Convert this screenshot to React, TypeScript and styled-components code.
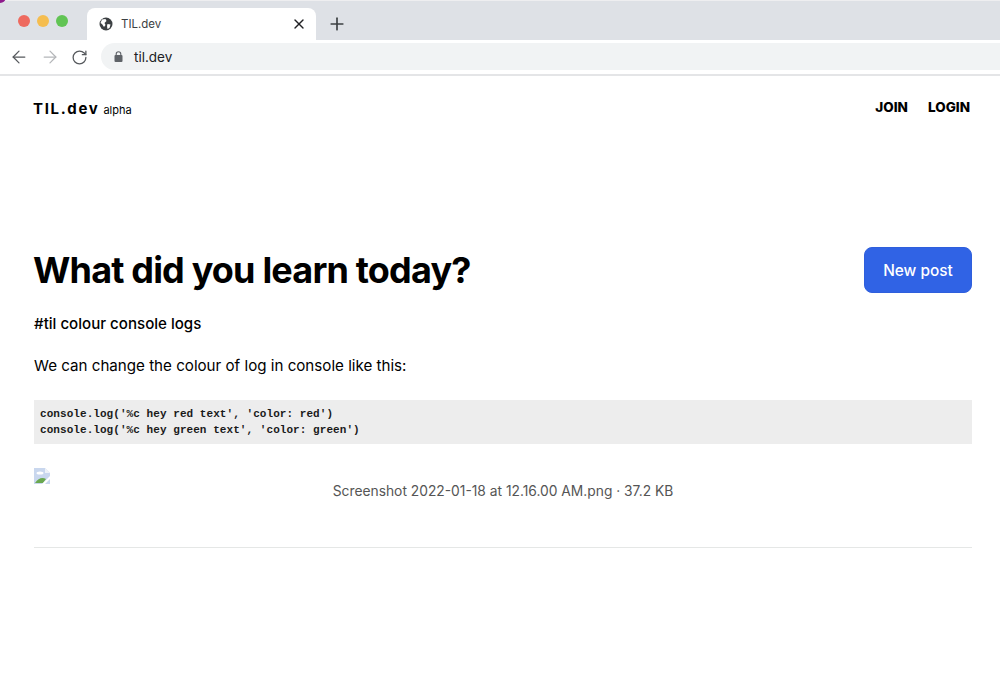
import React from 'react';
import styled, { createGlobalStyle } from 'styled-components';
import { ArrowLeft, ArrowRight, Plus, RotateCw, X } from 'lucide-react';

const GlobalStyle = createGlobalStyle`
  html, body {
    margin: 0;
    padding: 0;
    background: #fff;
    font-family: Inter, "Liberation Sans", sans-serif;
    color: #000;
  }
`;

const Window = styled.div`
  width: 1000px;
  height: 699px;
  overflow: hidden;
`;

const TabStrip = styled.div`
  position: relative;
  height: 40px;
  box-sizing: border-box;
  background: #dee1e6;
  border-top: 1px solid #eeeef0;
  display: flex;
  align-items: flex-end;
  padding-left: 87px;
`;

const CornerMark = styled.div`
  position: absolute;
  left: -6px;
  top: -10px;
  width: 12px;
  height: 12px;
  border-radius: 50%;
  background: #8e1a8c;
`;

const Lights = styled.div`
  position: absolute;
  left: 18px;
  top: 14px;
  display: flex;
  gap: 7px;
`;

const Light = styled.span<{ $color: string }>`
  width: 12px;
  height: 12px;
  border-radius: 50%;
  background: ${(p) => p.$color};
`;

const Tab = styled.div`
  width: 229px;
  height: 32px;
  box-sizing: border-box;
  background: #fff;
  border-radius: 8px 8px 0 0;
  display: flex;
  align-items: center;
  padding: 0 9px 0 12px;
  font-size: 11.5px;
  color: #3c4043;
`;

const TabTitle = styled.span`
  margin-left: 8px;
  flex: 1;
`;

const NewTab = styled.div`
  height: 32px;
  margin-left: 11px;
  display: flex;
  align-items: center;
  color: #3c4043;
`;

const Toolbar = styled.div`
  height: 36px;
  box-sizing: border-box;
  background: #fff;
  border-bottom: 2px solid #e4e5e7;
  display: flex;
  align-items: center;
  padding-left: 9px;
`;

const NavIcons = styled.div`
  display: flex;
  align-items: center;
  gap: 11px;
  color: #55585c;
`;

const Omnibox = styled.div`
  margin-left: 13px;
  flex: 1;
  height: 27px;
  margin-bottom: 1px;
  border-radius: 14px 0 0 14px;
  background: #f1f3f4;
  display: flex;
  align-items: center;
  padding-left: 13px;
  font-size: 13.5px;
  color: #202124;
  gap: 11px;
`;

const Page = styled.div`
  padding: 0 28px 0 34px;
`;

const Header = styled.header`
  height: 62px;
  display: flex;
  align-items: center;
  justify-content: space-between;
  margin-left: -1px;
  padding-right: 2px;
`;

const Brand = styled.div`
  display: flex;
  align-items: baseline;
  gap: 4px;
  padding-top: 2px;
`;

const Logo = styled.span`
  font-size: 15px;
  font-weight: 700;
  letter-spacing: 1.65px;
`;

const Stage = styled.span`
  font-size: 11px;
`;

const HeaderLinks = styled.nav`
  display: flex;
  gap: 20px;
  font-size: 13.5px;
  font-weight: 800;
`;

const TitleRow = styled.div`
  margin-top: 109px;
  display: flex;
  align-items: center;
  justify-content: space-between;
`;

const Title = styled.h1`
  margin: 0 0 0 -1px;
  font-size: 36px;
  line-height: 46px;
  font-weight: 700;
  letter-spacing: -0.82px;
`;

const NewPost = styled.button`
  width: 108px;
  height: 46px;
  border: 1px solid #2f5fdc;
  border-radius: 8px;
  background: #3063e5;
  color: #fff;
  font: 500 15.4px Inter, "Liberation Sans", sans-serif;
`;

const PostTitle = styled.p`
  margin: 21px 0 0;
  font-size: 15.1px;
  line-height: 20px;
  font-weight: 500;
`;

const PostBody = styled.p`
  margin: 22px 0 0;
  font-size: 15.15px;
  line-height: 20px;
`;

const Code = styled.pre`
  margin: 24px 0 0;
  height: 44px;
  box-sizing: border-box;
  padding: 6px;
  background: #ededed;
  font-family: "Liberation Mono", monospace;
  font-size: 11px;
  line-height: 16px;
  font-weight: 700;
  letter-spacing: 0.06px;
  color: #1a1a1a;
`;

const Attachment = styled.div`
  position: relative;
  margin-top: 24px;
  height: 79px;
  border-bottom: 1px solid #e5e7e6;
  text-align: center;
  font-size: 13.8px;
  line-height: 18px;
  color: #555;
`;

const BrokenImage = styled.svg`
  position: absolute;
  left: 0;
  top: 0;
`;

const Caption = styled.div`
  padding-top: 14px;
`;

export default function App() {
  return (
    <Window>
      <GlobalStyle />
      <TabStrip>
        <CornerMark />
        <Lights>
          <Light $color="#ee6a5f" />
          <Light $color="#f5bd4f" />
          <Light $color="#61c454" />
        </Lights>
        <Tab>
          <svg width="14" height="14" viewBox="0 0 14 14">
            <circle cx="7" cy="7" r="6.5" fill="#3c4043" />
            <path d="M3 2.5 L6.5 2 L7.5 4 L5.5 6 L6.5 8 L5 10 L3 7 L1.5 6 Z" fill="#fff" />
            <path d="M8.5 7 L11.5 7.5 L10.5 11 L8.5 12 L8 9 Z" fill="#fff" />
          </svg>
          <TabTitle>TIL.dev</TabTitle>
          <X size={16} strokeWidth={2} color="#202124" />
        </Tab>
        <NewTab>
          <Plus size={20} strokeWidth={2} />
        </NewTab>
      </TabStrip>
      <Toolbar>
        <NavIcons>
          <ArrowLeft size={20} strokeWidth={1.5} />
          <ArrowRight size={20} strokeWidth={1.5} color="#b4b6b9" />
          <RotateCw size={17} strokeWidth={1.8} />
        </NavIcons>
        <Omnibox>
          <svg width="9" height="11" viewBox="0 0 9 11">
            <rect x="0.5" y="4" width="8" height="7" rx="1" fill="#5f6368" />
            <path d="M2.2 4.5 V3 a2.3 2.3 0 0 1 4.6 0 V4.5" fill="none" stroke="#5f6368" strokeWidth="1.1" />
          </svg>
          til.dev
        </Omnibox>
      </Toolbar>
      <Page>
        <Header>
          <Brand>
            <Logo>TIL.dev</Logo>
            <Stage>alpha</Stage>
          </Brand>
          <HeaderLinks>
            <span>JOIN</span>
            <span>LOGIN</span>
          </HeaderLinks>
        </Header>
        <TitleRow>
          <Title>What did you learn today?</Title>
          <NewPost>New post</NewPost>
        </TitleRow>
        <PostTitle>#til colour console logs</PostTitle>
        <PostBody>We can change the colour of log in console like this:</PostBody>
        <Code>
          {"console.log('%c hey red text', 'color: red')\nconsole.log('%c hey green text', 'color: green')"}
        </Code>
        <Attachment>
          <BrokenImage width="16" height="16" viewBox="0 0 16 16">
            <path d="M0 0 H11 L16 5 V16 H0 Z" fill="#c9d7ee" />
            <path d="M11 0 L16 5 H11 Z" fill="#eef2f8" />
            <ellipse cx="6" cy="5" rx="3.5" ry="1.6" fill="#fff" />
            <path d="M1 15 Q6 8 12 11 L9 15 Z" fill="#6aa84f" />
            <path d="M8 16 L16 8 V11 L11 16 Z" fill="#fff" />
          </BrokenImage>
          <Caption>Screenshot 2022-01-18 at 12.16.00 AM.png · 37.2 KB</Caption>
        </Attachment>
      </Page>
    </Window>
  );
}
